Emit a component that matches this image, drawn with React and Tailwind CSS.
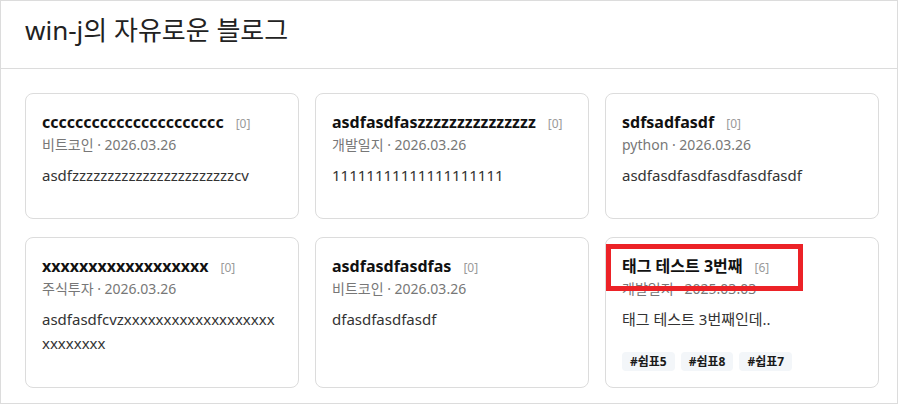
import React from 'react';

const posts = [
  {
    id: 1,
    title: 'cccccccccccccccccccccc',
    comments: 0,
    category: '비트코인',
    date: '2026.03.26',
    summary: 'asdfzzzzzzzzzzzzzzzzzzzzzzzcv',
    tags: [],
  },
  {
    id: 2,
    title: 'asdfasdfaszzzzzzzzzzzzzzz',
    comments: 0,
    category: '개발일지',
    date: '2026.03.26',
    summary: '11111111111111111111',
    tags: [],
  },
  {
    id: 3,
    title: 'sdfsadfasdf',
    comments: 0,
    category: 'python',
    date: '2026.03.26',
    summary: 'asdfasdfasdfasdfasdfasdf',
    tags: [],
  },
  {
    id: 4,
    title: 'xxxxxxxxxxxxxxxxxx',
    comments: 0,
    category: '주식투자',
    date: '2026.03.26',
    summary: 'asdfasdfcvzxxxxxxxxxxxxxxxxxxxxxxxxxxx',
    tags: [],
  },
  {
    id: 5,
    title: 'asdfasdfasdfas',
    comments: 0,
    category: '비트코인',
    date: '2026.03.26',
    summary: 'dfasdfasdfasdf',
    tags: [],
  },
  {
    id: 6,
    title: '태그 테스트 3번째',
    comments: 6,
    category: '개발일지',
    date: '2025.03.03',
    summary: '태그 테스트 3번째인데..',
    tags: ['쉼표5', '쉼표8', '쉽표7'],
    highlighted: true,
  },
];

const PostCard = ({ post }) => {
  return (
    <div className="relative bg-white border border-[#dcdcdc] rounded-lg p-4">
      <div className="flex items-baseline h-6">
        <span className="text-[16px] font-bold text-[#111] leading-6">{post.title}</span>
        <span className="ml-3 text-[12px] text-[#9a9a9a]">[{post.comments}]</span>
      </div>
      <p className="text-[14px] text-[#777] leading-[21px]">
        {post.category} · {post.date}
      </p>
      <p className="mt-2 mb-[15px] text-[15px] text-[#333] leading-6 break-all">{post.summary}</p>
      {post.tags.length > 0 && (
        <div className="flex gap-1.5 pt-1.5">
          {post.tags.map((tag) => (
            <span
              key={tag}
              className="px-2 h-[19px] flex items-center rounded bg-[#f3f6f9] text-[12px] font-bold text-[#1a1a1a]"
            >
              #{tag}
            </span>
          ))}
        </div>
      )}
      {post.highlighted && (
        <div className="absolute left-0 top-[6px] w-[197px] h-[47px] border-[5px] border-[#ec2227] pointer-events-none" />
      )}
    </div>
  );
};

const App = () => {
  return (
    <div
      className="w-[898px] h-[404px] border border-[#dcdcdc] bg-white overflow-hidden"
      style={{ fontFamily: '"Noto Sans", "Noto Sans CJK KR", sans-serif' }}
    >
      <header className="h-[68px] border-b border-[#dcdcdc] pl-6 flex items-center">
        <h1 className="text-[26px] text-[#222] font-normal -mt-2">win-j의 자유로운 블로그</h1>
      </header>

      <main className="pl-6 pr-[18px] pt-6">
        <div className="grid grid-cols-3 gap-x-4 gap-y-[18px]">
          {posts.map((post) => (
            <PostCard key={post.id} post={post} />
          ))}
        </div>
      </main>
    </div>
  );
};

export default App;
